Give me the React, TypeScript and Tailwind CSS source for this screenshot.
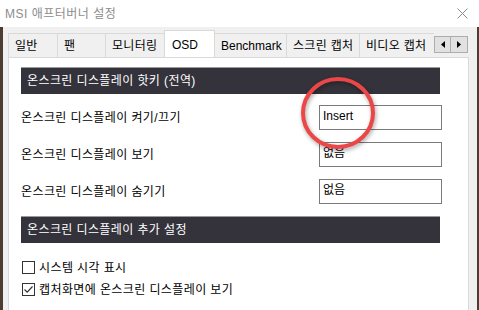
import React from "react";

const font = { fontFamily: '"Liberation Sans", "Noto Sans CJK KR", sans-serif' };

const tabs = [
  { label: "일반", w: "w-[50px]", kr: true },
  { label: "팬", w: "w-[49px]", kr: true },
  { label: "모니터링", w: "w-[60px]", kr: true },
  { label: "OSD", w: "w-[51px]", active: true },
  { label: "Benchmark", w: "w-[73px]" },
  { label: "스크린 캡처", w: "w-[74px]", kr: true },
  { label: "비디오 캡처", w: "w-[80px]", kr: true },
];

const hotkeys = [
  { label: "온스크린 디스플레이 켜기/끄기", value: "Insert" },
  { label: "온스크린 디스플레이 보기", value: "없음" },
  { label: "온스크린 디스플레이 숨기기", value: "없음" },
];

function SectionHeader({ children }: { children: React.ReactNode }) {
  return (
    <div className="flex h-[27px] w-[419px] items-center border-t border-[#9a9a9a] bg-[#34333b] pl-[6px] text-[12px] tracking-[0.4px] text-white">
      {children}
    </div>
  );
}

function Checkbox({ checked, label }: { checked?: boolean; label: string }) {
  return (
    <div className="flex h-[17px] items-center gap-[4px] text-[12px] tracking-[0.4px] text-black">
      <span className="flex h-[13px] w-[13px] items-center justify-center border border-[#333333] bg-white">
        {checked && (
          <svg width="11" height="11" viewBox="0 0 11 11">
            <path d="M1.5 5.5 L4.2 8.2 L9.5 2.5" fill="none" stroke="#333" strokeWidth="1.2" />
          </svg>
        )}
      </span>
      <span>{label}</span>
    </div>
  );
}

export default function App() {
  return (
    <div className="relative flex h-[310px] w-[479px] flex-col overflow-hidden bg-[#4b3d31]" style={font}>
      <div className="flex h-[27px] shrink-0 items-center justify-between bg-white pl-[5px] pr-[11px]">
        <span className="text-[12px] tracking-[0.5px] text-[#8c8c8c]">MSI 애프터버너 설정</span>
        <svg width="11" height="11" viewBox="0 0 11 11">
          <path d="M0.5 0.5 L10.5 10.5 M10.5 0.5 L0.5 10.5" stroke="#8a8a8a" strokeWidth="1" />
        </svg>
      </div>

      <div className="ml-[3px] flex w-[474px] flex-1 flex-col bg-[#f0f0f0] pl-[5px] pr-[8px] pt-[3px]">
        <div className="flex h-[27px] items-end">
          <div className="flex w-[426px] items-end overflow-hidden">
            {tabs.map((t) => (
              <div
                key={t.label}
                className={
                  t.active
                    ? `${t.w} relative z-10 -mb-px -ml-px flex h-[28px] shrink-0 items-start border border-b-0 border-[#d9d9d9] bg-white pl-[7px] pt-[5px] text-[12px] text-black`
                    : `${t.w} -ml-px flex h-[24px] shrink-0 items-center border border-b-0 border-[#d9d9d9] bg-[#f0f0f0] pl-[6px] text-[12px] text-black first:ml-0`
                }
              >
                <span className={t.kr ? "whitespace-nowrap tracking-[0.3px]" : "whitespace-nowrap"}>{t.label}</span>
              </div>
            ))}
          </div>
          <div className="mb-[4px] flex">
            <div className="flex h-[17px] w-[17px] items-center justify-center border border-[#adadad] bg-[#e1e1e1]">
              <svg width="4" height="7" viewBox="0 0 4 7">
                <path d="M4 0 L0 3.5 L4 7 Z" fill="#000" />
              </svg>
            </div>
            <div className="-ml-px flex h-[17px] w-[18px] items-center justify-center border border-[#adadad] bg-[#e1e1e1]">
              <svg width="4" height="7" viewBox="0 0 4 7">
                <path d="M0 0 L4 3.5 L0 7 Z" fill="#000" />
              </svg>
            </div>
          </div>
        </div>

        <div className="flex flex-1 flex-col border border-b-0 border-[#d9d9d9] bg-white pl-[12px] pt-[9px]">
          <SectionHeader>온스크린 디스플레이 핫키 (전역)</SectionHeader>
          <div className="mt-[11px] flex w-[421px] flex-col gap-[12px]">
            {hotkeys.map((h) => (
              <div key={h.label} className="flex items-center justify-between text-[12px] text-black">
                <span className="tracking-[0.4px]">{h.label}</span>
                <div className="h-[25px] w-[123px] border border-[#7a7a7a] bg-white pl-[3px] pt-[2px] leading-[17px]">
                  {h.value}
                </div>
              </div>
            ))}
          </div>
          <div className="mt-[12px]">
            <SectionHeader>온스크린 디스플레이 추가 설정</SectionHeader>
          </div>
          <div className="mt-[16px] flex flex-col gap-[5px] pl-[1px]">
            <Checkbox label="시스템 시각 표시" />
            <Checkbox checked label="캡처화면에 온스크린 디스플레이 보기" />
          </div>
        </div>
      </div>

      <svg
        className="absolute left-[298px] top-[74px]"
        width="82"
        height="80"
        viewBox="0 0 82 80"
        style={{ filter: "drop-shadow(1px 2px 2px rgba(0,0,0,0.35))" }}
      >
        <ellipse cx="40" cy="39" rx="35" ry="34" fill="none" stroke="#ec4646" strokeWidth="4" />
      </svg>
    </div>
  );
}
